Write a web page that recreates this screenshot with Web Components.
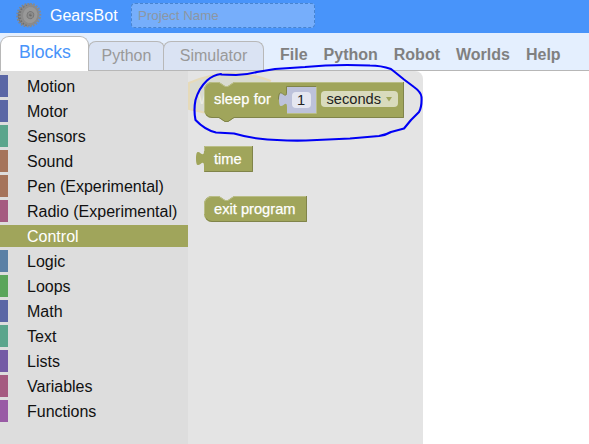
<!DOCTYPE html>
<html lang="en">
<head>
<meta charset="utf-8">
<title>GearsBot</title>
<style>
html,body{margin:0;height:100%;overflow:hidden;background:#fff;font:16px "Liberation Sans",Arial,sans-serif}
</style>
</head>
<body>
<gears-app></gears-app>
<script>
const define = (name, html, setup) => customElements.define(name, class extends HTMLElement {
  connectedCallback() {
    if (this.shadowRoot) return;
    const t = document.createElement('template');
    t.innerHTML = html;
    this.attachShadow({mode: 'open'}).append(t.content.cloneNode(true));
    if (setup) setup(this, this.shadowRoot);
  }
});

define('gear-logo', `<style>:host{display:block;width:26px;height:26px}svg{display:block}</style>
<svg width="26" height="26" viewBox="0 0 26 26">
  <g transform="rotate(14 13 13)">
    <ellipse cx="11.6" cy="13.6" rx="9.6" ry="10.8" fill="#6c6c6c"/>
    <ellipse cx="11.4" cy="13.6" rx="9.8" ry="11" fill="none" stroke="#858585" stroke-width="2.4" stroke-dasharray="1.6 1.5"/>
    <ellipse cx="14" cy="12.8" rx="9.4" ry="10.4" fill="#8b8b8b"/>
    <ellipse cx="14" cy="12.8" rx="10" ry="11" fill="none" stroke="#8b8b8b" stroke-width="2.4" stroke-dasharray="1.7 1.4"/>
    <ellipse cx="14.2" cy="12.8" rx="7.6" ry="8.6" fill="#989898" stroke="#858585" stroke-width=".6"/>
    <ellipse cx="14.4" cy="12.8" rx="3.3" ry="3.6" fill="#8c8c8c" stroke="#707070" stroke-width=".8"/>
    <circle cx="14.6" cy="12.6" r="1.3" fill="#5c5c5c"/><circle cx="14.9" cy="12.3" r=".6" fill="#bbb"/>
  </g>
</svg>`);

define('app-header', `<style>
:host{display:flex;align-items:flex-start;height:33px;background:#4894fa;color:#fff;box-sizing:border-box;padding-left:16px}
gear-logo{margin-top:2px}
.name{margin-left:8px;line-height:32px;width:81px}
.project{box-sizing:border-box;width:184px;height:25px;margin-top:3px;padding-left:6px;border:1px dashed #4884cf;border-radius:4px;background:#76aefb;color:#8c96a3;font-size:13.33px;line-height:24px}
</style><gear-logo></gear-logo><div class="name"><slot></slot></div><div class="project">Project Name</div>`);

define('panel-tab', `<style>
:host{display:block;box-sizing:border-box;height:29px;border:1px solid #b8b8b8;border-bottom:0;border-radius:8px 8px 0 0;background:#dae3f3;color:#999;text-align:center;line-height:28px}
:host([active]){height:35px;background:#fff;color:#4894fa;font-size:17.6px;line-height:30px;border-radius:9px 9px 0 0;margin-bottom:-1px;z-index:1}
</style><slot></slot>`);

define('menu-item', `<style>:host{display:block;font-weight:bold;color:#808080;line-height:20px}</style><slot></slot>`);

define('tool-bar', `<style>
:host{display:flex;align-items:flex-end;box-sizing:border-box;height:38px;background:#e4effe;border-bottom:1px solid #b7b7b7}
nav{display:flex;gap:16px;margin:0 0 5px 16px}
</style>
<panel-tab active style="width:89px;padding-left:1px">Blocks</panel-tab><panel-tab style="width:77px;margin-left:-1px">Python</panel-tab><panel-tab style="width:101px;margin-left:-2px">Simulator</panel-tab>
<nav><menu-item>File</menu-item><menu-item>Python</menu-item><menu-item>Robot</menu-item><menu-item>Worlds</menu-item><menu-item>Help</menu-item></nav>`);

define('tool-category', `<style>
:host{display:block;box-sizing:border-box;height:22px;margin-bottom:3px;border-left:8px solid var(--hue);padding-left:19px;line-height:24px;color:#111;white-space:nowrap}
:host([selected]){background:var(--hue);color:#fff}
</style><slot></slot>`, el => el.style.setProperty('--hue', el.getAttribute('hue')));

define('tool-box', `<style>:host{display:block;box-sizing:border-box;width:188px;padding-top:4px;background:#ddd}</style>
${[['Motion','#5b67a5'],['Motor','#5b67a5'],['Sensors','#5ba58c'],['Sound','#a5745b'],['Pen (Experimental)','#a5745b'],['Radio (Experimental)','#a55b80'],['Control','#a0a55b'],['Logic','#5b80a5'],['Loops','#5ba55b'],['Math','#5b67a5'],['Text','#5ba58c'],['Lists','#745ba5'],['Variables','#a55b80'],['Functions','#995ba5']]
  .map(([n, c]) => `<tool-category hue="${c}"${n === 'Control' ? ' selected' : ''}>${n}</tool-category>`).join('')}`);

define('block-canvas', `<style>
:host{display:block;width:401px;height:373px}
svg{display:block;overflow:visible}
text{font:14.67px "Liberation Sans",Arial,sans-serif;fill:#fff}
.label{stroke:#fff;stroke-width:.25px}
.b{fill:#a0a55b}.hi{fill:none;stroke:#b9bd86;stroke-width:1}.lo{fill:none;stroke:#80844a;stroke-width:1}
</style>
<svg width="401" height="373" viewBox="188 71 401 373">
  <path fill="#e4e4e4" d="M188 71H415a8 8 0 0 1 8 8V444H188z"/>
  <path fill="#d9dbd0" d="M188.5 83Q229 65 270 81V90H210V112.5H204L188.5 108z"/>
  <path fill="none" stroke="#e6dab9" stroke-width="2" d="M204 112.5L189 109V83Q229 65 271 81"/>
  <text x="198" y="104" style="fill:#ebece5">W</text>

  <path class="b" d="M204 90a8 8 0 0 1 8-8H219l6 4h3l6-4H404V118H234l-6 4h-3l-6-4H212a8 8 0 0 1-8-8z"/>
  <path class="hi" d="M204.5 111V90a7.5 7.5 0 0 1 7.5-7.5H219l6 4h3l6-4H403"/>
  <path class="lo" d="M403.5 82V117.5H234l-6 4h-3l-6-4H212a8 8 0 0 1-6-3"/>
  <text class="label" x="214" y="104" textLength="57">sleep for</text>
  <path fill="#bdc2db" d="M287 87H316V113H287V107C287 97 279 115 279 99.5S287 102 287 92z"/>
  <path fill="none" stroke="#80844a" d="M316 86.5H286.5V92C286.5 102 278.5 84 278.5 99.5"/>
  <path fill="none" stroke="#b9bd86" d="M316.5 87V113.5H287"/>
  <rect x="292" y="92" width="19" height="16" rx="4" fill="#e5e7f1"/>
  <text x="297" y="104.5" style="fill:#222">1</text>
  <rect x="321" y="91" width="77" height="16" rx="4" fill="#d9dbbd"/>
  <text x="326.5" y="104" style="fill:#222" textLength="54.5">seconds</text>
  <path fill="#a0a55b" d="M386 97h6l-3 4.5z"/>

  <path class="b" d="M204 146H253V172H204V166C204 156 196 174 196 158.5S204 161 204 151z"/>
  <path class="hi" d="M252 146.5H204.5V151"/>
  <path class="lo" d="M252.5 146V171.5H204.5"/>
  <text class="label" x="214" y="164">time</text>

  <path class="b" d="M204 204a8 8 0 0 1 8-8H219l6 4h3l6-4H307V222H212a8 8 0 0 1-8-8z"/>
  <path class="hi" d="M204.5 214V204a7.5 7.5 0 0 1 7.5-7.5H219l6 4h3l6-4H306"/>
  <path class="lo" d="M306.5 196V221.5H212a8 8 0 0 1-6-3"/>
  <text class="label" x="214" y="214" textLength="81.5">exit program</text>

  <path fill="none" stroke="#0000f5" stroke-width="2.1" stroke-linecap="round" stroke-linejoin="round" d="M221 74Q213 75 207 80.5Q199 88 195.5 100Q193.5 110 195.5 120Q205 130 216 132.5L234 133.5Q246 137 258 138.5Q280 141 306 140.5L350 138.5L379 136Q386 135 391 132L404 128.5L411 120L419 112Q422 107 421.5 97Q421 92 414 87L404 79.5L396 73L391 69Q381 65.5 370 65.5Q335 64 305 67L275 69L257 72Q246 75 236 75Q226 74.5 221 74.5"/>
</svg>`);

define('gears-app', `<style>
:host{display:flex;flex-direction:column;height:444px;width:589px;overflow:hidden}
main{display:flex;flex:1}
</style><app-header>GearsBot</app-header><tool-bar></tool-bar><main><tool-box></tool-box><block-canvas></block-canvas></main>`);
</script>
</body>
</html>
